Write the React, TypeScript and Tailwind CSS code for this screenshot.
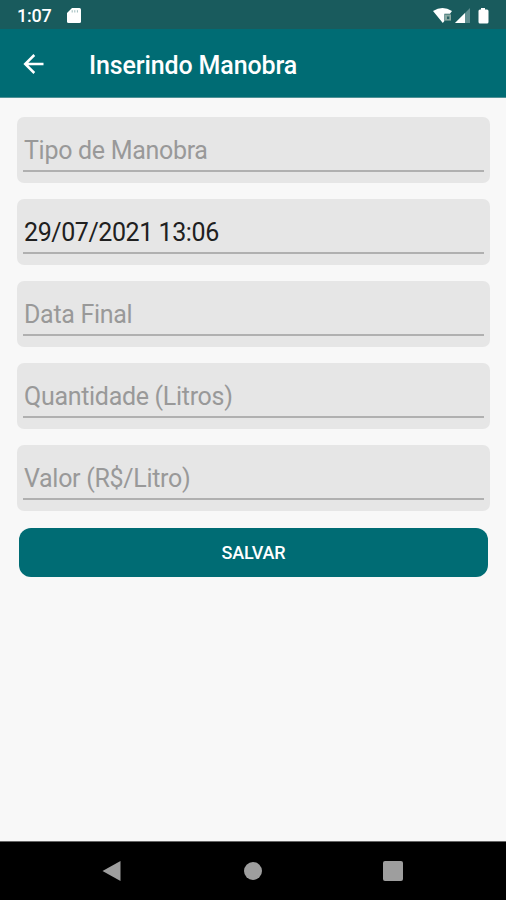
const fields = [
  { name: 'tipo', placeholder: 'Tipo de Manobra', value: '' },
  { name: 'dataInicial', placeholder: 'Data Inicial', value: '29/07/2021 13:06' },
  { name: 'dataFinal', placeholder: 'Data Final', value: '' },
  { name: 'quantidade', placeholder: 'Quantidade (Litros)', value: '' },
  { name: 'valor', placeholder: 'Valor (R$/Litro)', value: '' },
];

function StatusBar() {
  return (
    <div className="flex h-[29px] items-center bg-[#195b5d] pr-[16px] pl-[17px] text-white">
      <span className="w-[50px] pt-[2px] text-[18px] leading-none font-medium tracking-[-0.2px]">1:07</span>
      <svg width="14" height="17" viewBox="0 0 14 17" className="mt-[2px]">
        <path
          fill="currentColor"
          d="M5 1h7.5q1.5 0 1.5 1.5v12q0 1.5-1.5 1.5h-11Q0 16 0 14.5V6z"
        />
        <path d="M5.2 3.2v2.3M7.8 3.2v2.3M10.4 3.2v2.3" stroke="#9dbbbc" />
      </svg>
      <svg width="57" height="18" viewBox="0 0 57 18" className="mt-[2px] ml-auto">
        <path d="M0 4Q9.5-2 19 4l-2 2.8h-5.6v7.2L9.8 16z" fill="white" />
        <path d="M12 7.4h6v6.2h-6z" fill="#8ba9a2" />
        <path d="M14 9.5h2.3v2.6H14z" fill="#2c6466" />
        <path d="M37 1v15H22z" fill="#5f8e90" />
        <path d="M32 6v10H22z" fill="white" />
        <path
          d="M48 1h4v1.5h2q1.5 0 1.5 1.5v11q0 1.5-1.5 1.5h-7q-1.5 0-1.5-1.5V4q0-1.5 1.5-1.5h1z"
          fill="white"
        />
      </svg>
    </div>
  );
}

function AppBar() {
  return (
    <header className="flex h-[69px] items-center border-b border-[#4f9196] bg-[#006c74] pl-[23px] text-white">
      <button type="button" aria-label="Voltar" className="w-[66px] pt-[2px]">
        <svg width="21" height="20" viewBox="0 0 21 20" fill="none" stroke="currentColor" strokeWidth="2.5">
          <path d="M20.5 10H2M11.3 1L2.2 10l9.1 9" />
        </svg>
      </button>
      <h1 className="pt-[5px] text-[25px] leading-none font-medium tracking-[-0.13px]">Inserindo Manobra</h1>
    </header>
  );
}

function Field({ name, placeholder, value }: { name: string; placeholder: string; value: string }) {
  return (
    <div className="h-[66px] rounded-[7px] bg-[#e6e6e6] px-[6px] pt-[9px]">
      <input
        name={name}
        placeholder={placeholder}
        defaultValue={value}
        className="block h-[46px] w-full border-b-2 border-[#b0b0b0] px-px pt-[5px] text-[25px] tracking-[-0.42px] text-[#202020] outline-none placeholder:tracking-[-0.3px] placeholder:text-[#999999]"
      />
    </div>
  );
}

function NavigationBar() {
  return (
    <nav className="flex h-[59px] items-center justify-between border-t border-[#666666] bg-black pr-[103px] pl-[102px]">
      <svg width="19" height="22" viewBox="0 0 19 22" fill="#9e9e9e">
        <path d="M18.5 1v20L.5 11z" />
      </svg>
      <svg width="18" height="18" viewBox="0 0 18 18" fill="#9e9e9e" className="ml-[2px]">
        <circle cx="9" cy="9" r="9" />
      </svg>
      <svg width="20" height="20" viewBox="0 0 20 20" fill="#9e9e9e">
        <rect width="20" height="20" rx="2" />
      </svg>
    </nav>
  );
}

export default function App() {
  return (
    <div className="flex h-[900px] w-[506px] flex-col bg-[#f8f8f8] font-['Roboto',sans-serif]">
      <StatusBar />
      <AppBar />
      <main className="flex-1 pt-[18.5px] pr-[16px] pl-[17px]">
        <form className="flex flex-col gap-[16.2px]" onSubmit={(e) => e.preventDefault()}>
          {fields.map((field) => (
            <Field key={field.name} {...field} />
          ))}
          <button
            type="submit"
            className="mx-[2px] mt-[0.5px] h-[49px] rounded-[12px] bg-[#006c74] pt-px text-[18px] font-medium tracking-[-0.2px] text-white"
          >
            SALVAR
          </button>
        </form>
      </main>
      <NavigationBar />
    </div>
  );
}
